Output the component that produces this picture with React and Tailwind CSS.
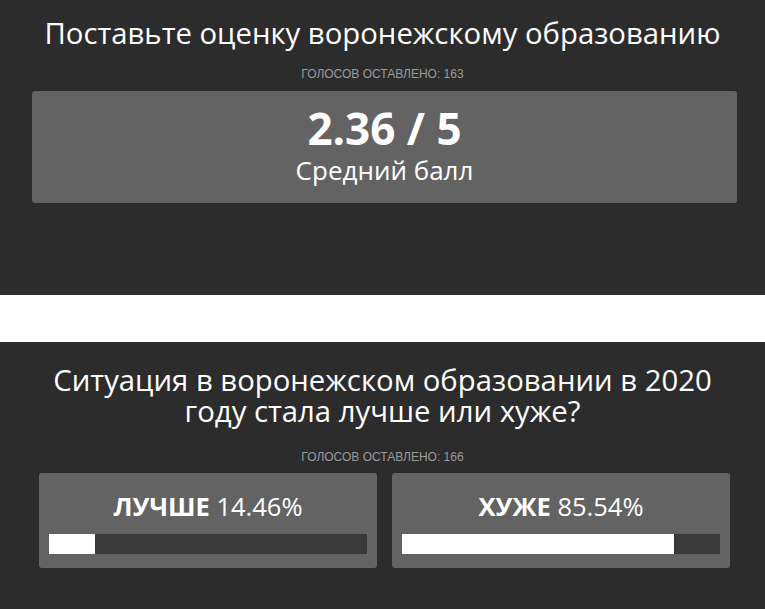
export default function App() {
  const font = { fontFamily: '"Open Sans", sans-serif' };
  return (
    <div className="w-[765px] h-[609px] bg-white overflow-hidden" style={font}>
      <section className="h-[295px] bg-[#2c2c2c] flex flex-col items-center pt-[13px]">
        <h1 className="text-[29.3px] leading-[40px] text-white font-normal whitespace-nowrap">Поставьте оценку воронежскому образованию</h1>
        <div className="mt-[14px] text-[12px] leading-[14px] text-[#9a9a9a] uppercase font-['Liberation_Sans',sans-serif]">Голосов оставлено: 163</div>
        <div className="mt-[10px] ml-[32px] mr-[28px] self-stretch h-[112px] bg-[#636363] rounded-[3px] flex flex-col items-center pt-[12px]">
          <div className="text-[44px] leading-[50px] font-bold text-white">2.36 / 5</div>
          <div className="text-[26px] leading-[34px] text-white">Средний балл</div>
        </div>
      </section>
      <div className="h-[47px] bg-white" />
      <section className="h-[267px] bg-[#2c2c2c] flex flex-col items-center pt-[23px]">
        <h2 className="text-[29.3px] leading-[31px] text-white text-center w-[680px]">Ситуация в воронежском образовании в 2020 году стала лучше или хуже?</h2>
        <div className="mt-[23px] text-[12px] leading-[14px] text-[#9a9a9a] uppercase font-['Liberation_Sans',sans-serif]">Голосов оставлено: 166</div>
        <div className="mt-[9px] self-stretch ml-[39px] mr-[35px] grid grid-cols-2 gap-[15px]">
          {[
            { label: "Лучше", value: 14.46 },
            { label: "Хуже", value: 85.54 },
          ].map((o) => (
            <div key={o.label} className="h-[95px] bg-[#636363] rounded-[3px] px-[10px] pt-[17px]">
              <div className="text-center text-[25.5px] leading-[32px] text-white">
                <span className="font-bold uppercase">{o.label}</span> {o.value.toFixed(2)}%
              </div>
              <div className="mt-[12px] h-[20px] bg-[#3a3a3a]">
                <div className="h-full bg-white" style={{ width: `${o.value}%` }} />
              </div>
            </div>
          ))}
        </div>
      </section>
    </div>
  );
}
